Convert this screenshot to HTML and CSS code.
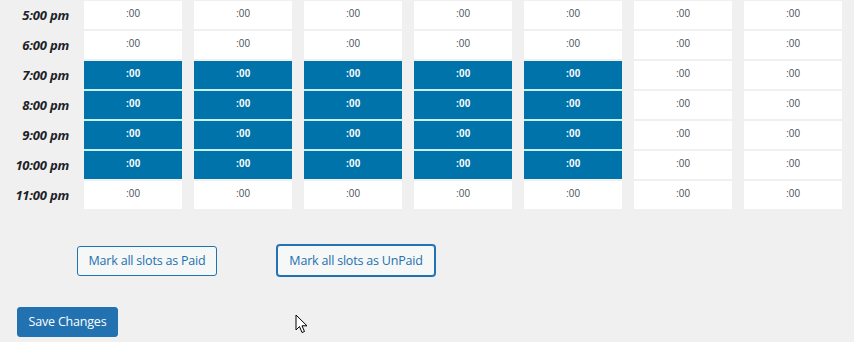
FILE: index.html
```html
<!DOCTYPE html>
<html>
<head>
<meta charset="utf-8">
<link rel="stylesheet" href="styles.css">
</head>
<body>
<div class="page">
  <div class="grid">
    <div class="label">5:00 pm</div>
    <div class="cell">:00</div><div class="cell">:00</div><div class="cell">:00</div><div class="cell">:00</div><div class="cell">:00</div><div class="cell">:00</div><div class="cell">:00</div>

    <div class="label">6:00 pm</div>
    <div class="cell">:00</div><div class="cell">:00</div><div class="cell">:00</div><div class="cell">:00</div><div class="cell">:00</div><div class="cell">:00</div><div class="cell">:00</div>

    <div class="label">7:00 pm</div>
    <div class="cell paid">:00</div><div class="cell paid">:00</div><div class="cell paid">:00</div><div class="cell paid">:00</div><div class="cell paid">:00</div><div class="cell">:00</div><div class="cell">:00</div>

    <div class="label">8:00 pm</div>
    <div class="cell paid">:00</div><div class="cell paid">:00</div><div class="cell paid">:00</div><div class="cell paid">:00</div><div class="cell paid">:00</div><div class="cell">:00</div><div class="cell">:00</div>

    <div class="label">9:00 pm</div>
    <div class="cell paid">:00</div><div class="cell paid">:00</div><div class="cell paid">:00</div><div class="cell paid">:00</div><div class="cell paid">:00</div><div class="cell">:00</div><div class="cell">:00</div>

    <div class="label">10:00 pm</div>
    <div class="cell paid last">:00</div><div class="cell paid last">:00</div><div class="cell paid last">:00</div><div class="cell paid last">:00</div><div class="cell paid last">:00</div><div class="cell">:00</div><div class="cell">:00</div>

    <div class="label">11:00 pm</div>
    <div class="cell">:00</div><div class="cell">:00</div><div class="cell">:00</div><div class="cell">:00</div><div class="cell">:00</div><div class="cell">:00</div><div class="cell">:00</div>
  </div>

  <div class="actions">
    <button class="btn btn-paid">Mark all slots as Paid</button>
    <button class="btn btn-unpaid">Mark all slots as UnPaid</button>
  </div>

  <div class="submit">
    <button class="btn-primary">Save Changes</button>
  </div>
</div>
<svg class="cursor" width="13" height="20" viewBox="0 0 13 20">
  <path d="M1 1 L1 16 L4.5 12.5 L7 18.5 L9.5 17.5 L7 11.8 L12 11.8 Z" fill="#fff" stroke="#000" stroke-width="1" stroke-linejoin="miter"/>
</svg>
</body>
</html>
```

FILE: styles.css
```css
html, body {
  margin: 0;
  padding: 0;
  background: #f0f0f1;
  font-family: "Open Sans", "Noto Sans", "Liberation Sans", sans-serif;
  color: #3c434a;
}

.page {
  position: relative;
  width: 854px;
  height: 342px;
  overflow: hidden;
}

.grid {
  display: grid;
  grid-template-columns: 72px repeat(7, 98px);
  grid-auto-rows: 28px;
  column-gap: 12px;
  row-gap: 2px;
  padding-top: 1px;
}

.label {
  padding-right: 3px;
  text-align: right;
  font-weight: 700;
  font-style: italic;
  font-size: 13px;
  letter-spacing: -0.2px;
  line-height: 28px;
  color: #1d2327;
}

.cell {
  background: #fff;
  text-align: center;
  font-size: 10px;
  line-height: 26px;
  color: #50575e;
  font-family: "Liberation Sans", Arial, sans-serif;
}

.cell.paid {
  background: #0073aa;
  color: #fff;
  font-weight: 700;
  box-shadow: 0 2px 0 #c6f1f7;
}

.cell.paid.last {
  box-shadow: none;
}

.actions {
  display: flex;
  gap: 60px;
  padding: 37px 0 0 77px;
  height: 30px;
}

.btn {
  box-sizing: border-box;
  height: 30px;
  padding: 0;
  background: #f6f7f7;
  border: 1px solid #2271b1;
  border-radius: 3px;
  color: #2271b1;
  font-family: "Open Sans", "Noto Sans", sans-serif;
  font-size: 12.5px;
  letter-spacing: -0.2px;
  line-height: 28px;
  white-space: nowrap;
}

.btn-paid {
  width: 140px;
}

.btn-unpaid {
  width: 158px;
  height: 31px;
  margin-top: -1px;
  box-shadow: 0 0 0 1px #2271b1;
}

.submit {
  padding: 31px 0 0 17px;
}

.btn-primary {
  box-sizing: border-box;
  width: 101px;
  height: 30px;
  background: #2271b1;
  border: 1px solid #2271b1;
  border-radius: 3px;
  color: #fff;
  font-family: "Open Sans", "Noto Sans", sans-serif;
  font-size: 12.5px;
  letter-spacing: -0.2px;
  line-height: 28px;
  padding: 0;
  white-space: nowrap;
}

.cursor {
  position: absolute;
  left: 295px;
  top: 314px;
}
```
